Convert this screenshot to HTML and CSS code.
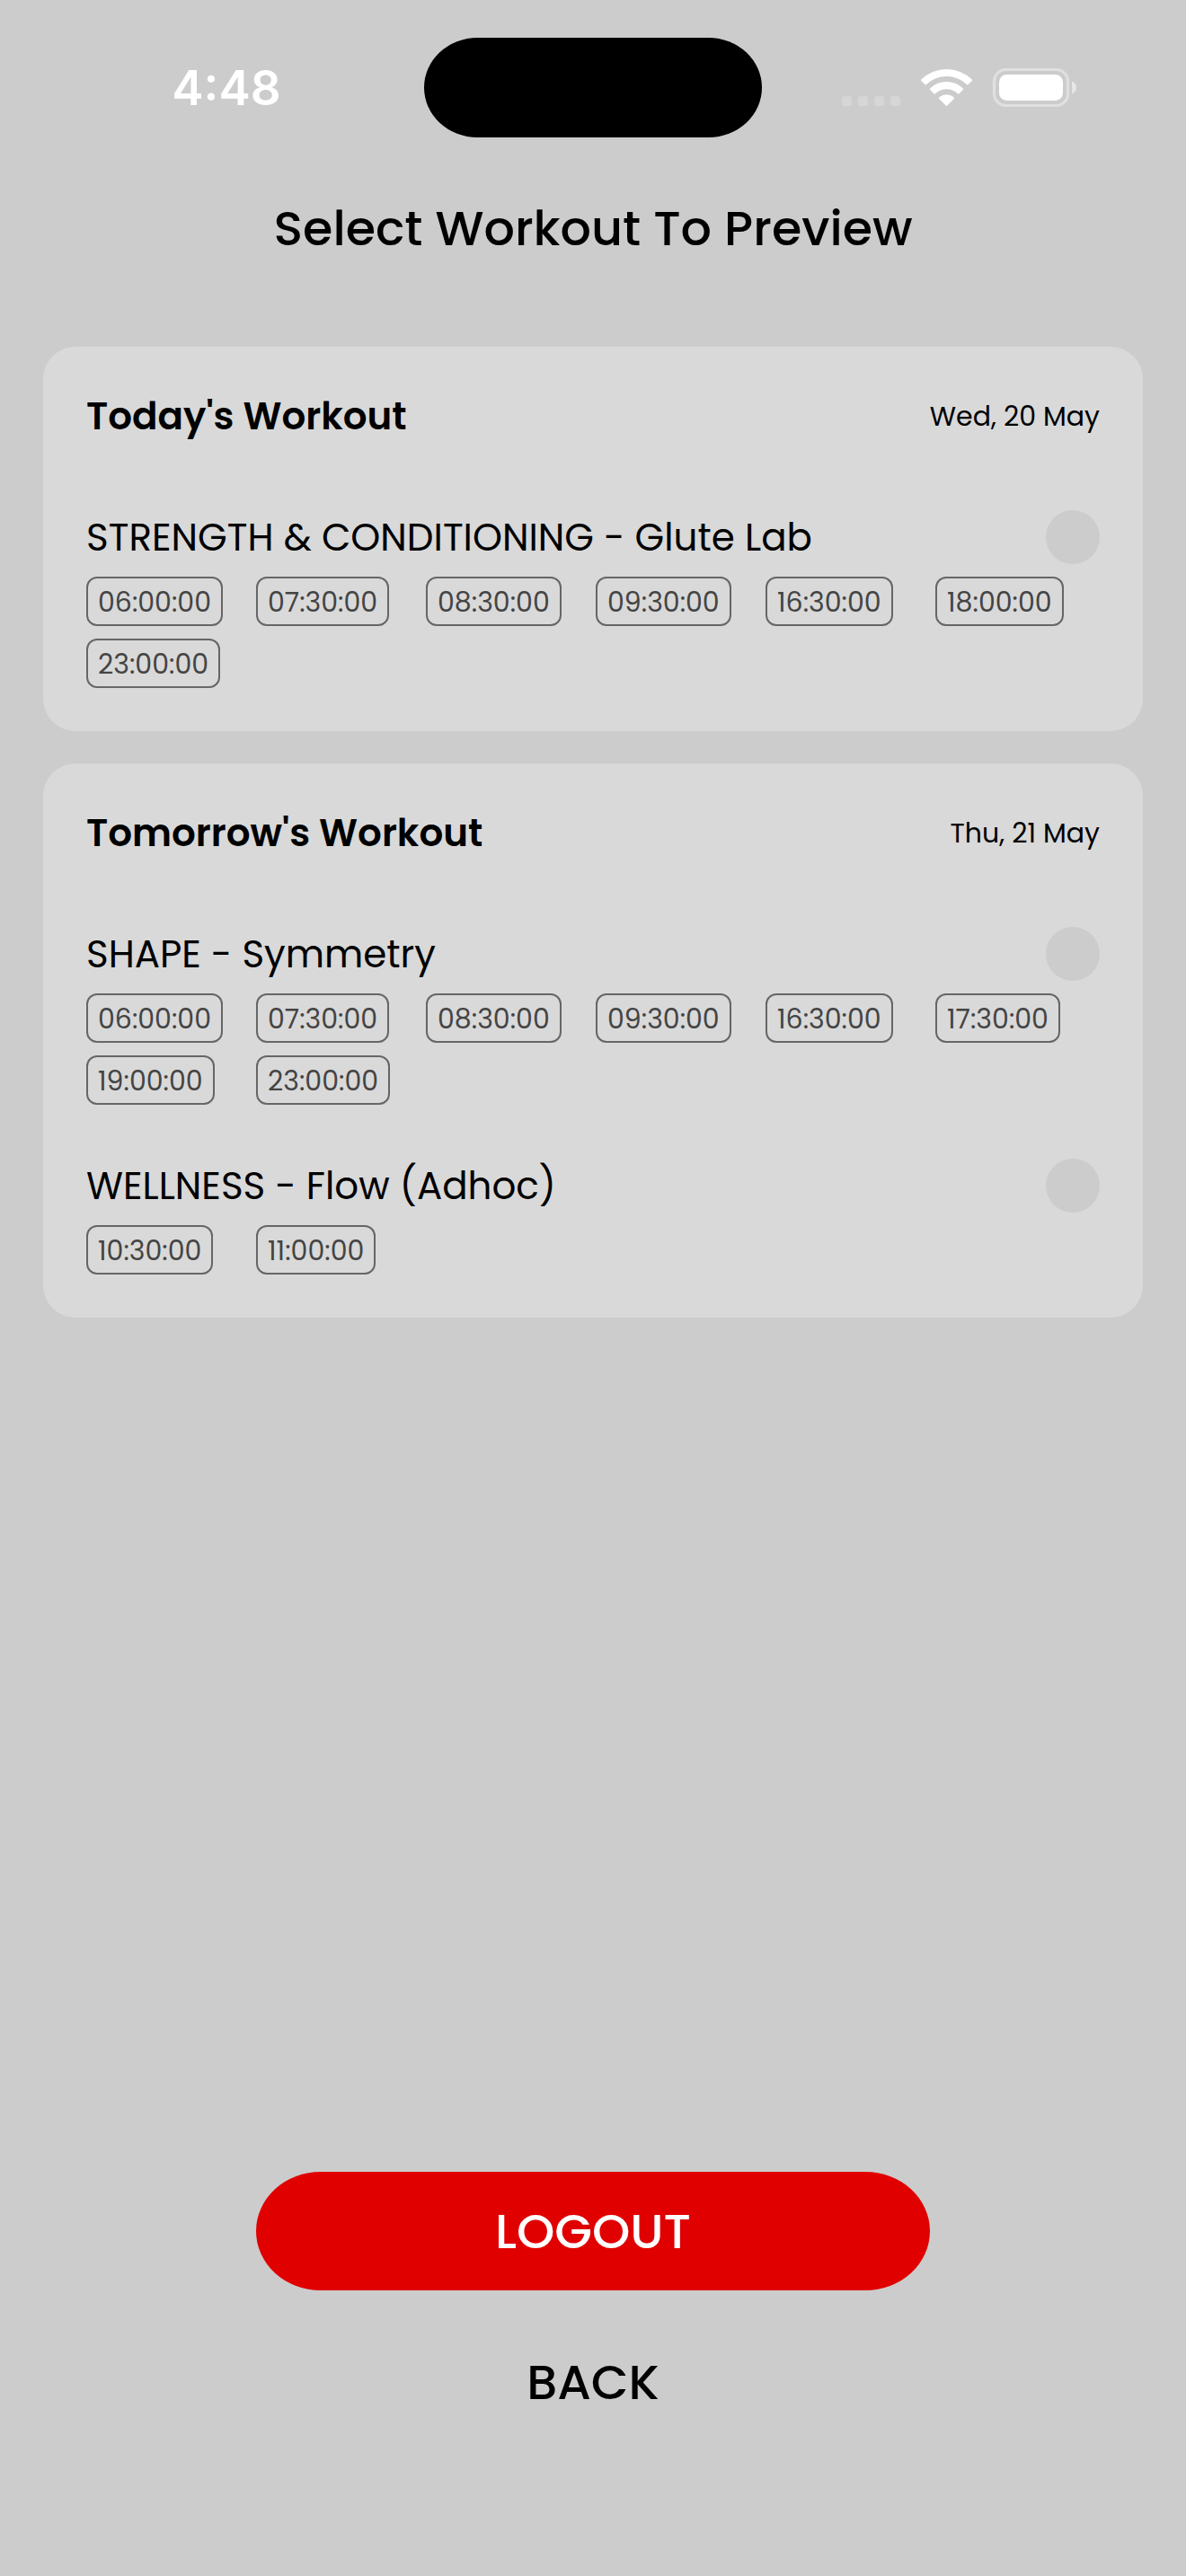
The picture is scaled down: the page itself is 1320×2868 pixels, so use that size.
FILE: index.html
```html
<!DOCTYPE html>
<html lang="en">
<head>
  <meta charset="UTF-8">
  <meta name="viewport" content="width=device-width, initial-scale=1.0">
  <title>Select Workout To Preview</title>
  <link rel="stylesheet" href="styles.css">
</head>
<body>
  <div class="status-bar">
    <span class="time">4:48</span>
    <div class="island"></div>
    <svg class="status-icons" width="262" height="44" viewBox="0 0 262 44" fill="#fff" aria-hidden="true">
      <!-- signal -->
      <g fill="#d6d6d6">
        <rect x="0" y="31" width="11" height="11" rx="3.5"/>
        <rect x="18" y="31" width="11" height="11" rx="3.5"/>
        <rect x="36" y="31" width="11" height="11" rx="3.5"/>
        <rect x="54" y="31" width="11" height="11" rx="3.5"/>
      </g>
      <!-- wifi -->
      <path d="M88.5 12.2A40.5 40.5 0 0 1 144.5 12.2Q145.5 13.3 144.5 14.3L140.7 18Q139.8 18.8 138.8 17.9A32.500 32.500 0 0 0 94.2 17.9Q93.2 18.8 92.3 18L88.5 14.3Q87.5 13.3 88.5 12.2Z"/>
      <path d="M98.4 22.3A26 26 0 0 1 134.6 22.3Q135.6 23.3 134.6 24.3L130.6 28.2Q129.7 29 128.7 28.1A18 18 0 0 0 104.3 28.1Q103.3 29 102.4 28.2L98.4 24.3Q97.4 23.3 98.4 22.3Z"/>
      <path d="M108.4 32.2A12.5 12.5 0 0 1 124.6 32.2Q125.6 33.2 124.6 34.2L117.5 41.3Q116.5 42.3 115.5 41.3L108.4 34.2Q107.4 33.2 108.4 32.2Z"/>
      <!-- battery -->
      <rect x="169.5" y="1.5" width="82" height="40" rx="13" fill="none" stroke="#e0e0e0" stroke-width="3.2"/>
      <rect x="175" y="7" width="71" height="29" rx="8.5"/>
      <path d="M256 14.5Q261 16.5 261 21.5T256 28.5Z" fill="#e6e6e6"/>
    </svg>
  </div>

  <h1>Select Workout To Preview</h1>

  <main class="cards">
    <section class="card">
      <div class="card-header">
        <h2>Today's Workout</h2>
        <span class="date">Wed, 20 May</span>
      </div>
      <div class="workout">
        <div class="workout-title">
          <label for="strength">STRENGTH &amp; CONDITIONING - Glute Lab</label>
          <input type="radio" name="workout" id="strength">
        </div>
        <ul class="times">
          <li>06:00:00</li>
          <li>07:30:00</li>
          <li>08:30:00</li>
          <li>09:30:00</li>
          <li>16:30:00</li>
          <li>18:00:00</li>
          <li>23:00:00</li>
        </ul>
      </div>
    </section>

    <section class="card">
      <div class="card-header">
        <h2>Tomorrow's Workout</h2>
        <span class="date">Thu, 21 May</span>
      </div>
      <div class="workout">
        <div class="workout-title">
          <label for="shape">SHAPE - Symmetry</label>
          <input type="radio" name="workout" id="shape">
        </div>
        <ul class="times">
          <li>06:00:00</li>
          <li>07:30:00</li>
          <li>08:30:00</li>
          <li>09:30:00</li>
          <li>16:30:00</li>
          <li>17:30:00</li>
          <li>19:00:00</li>
          <li>23:00:00</li>
        </ul>
      </div>
      <div class="workout">
        <div class="workout-title">
          <label for="wellness">WELLNESS - Flow (Adhoc)</label>
          <input type="radio" name="workout" id="wellness">
        </div>
        <ul class="times">
          <li>10:30:00</li>
          <li>11:00:00</li>
        </ul>
      </div>
    </section>
  </main>

  <div class="actions">
    <button type="button" class="logout">LOGOUT</button>
    <button type="button" class="back">BACK</button>
  </div>
</body>
</html>
```
FILE: styles.css
```css
* {
  box-sizing: border-box;
}
body {
  display: flex;
  flex-direction: column;
  min-height: 100vh;
  margin: 0;
  background: #ccc;
  color: #000;
  font-family: Poppins, Inter, sans-serif;
}
.status-bar {
  display: grid;
  grid-template-columns: 1fr 376px 1fr;
  align-items: center;
  justify-items: center;
  padding: 42px 32px 0;
}
.time {
  color: #fff;
  font-family: Inter, sans-serif;
  font-size: 53px;
  font-weight: 600;
}
.island {
  width: 100%;
  height: 111px;
  background: #000;
  border-radius: 60px / 56px;
}
h1 {
  margin: 61px 48px 92px;
  font-size: 54px;
  font-weight: 500;
  line-height: 80px;
  text-align: center;
}
.cards {
  display: flex;
  flex-direction: column;
  gap: 36px;
  padding: 0 48px;
}
.card {
  padding: 48px;
  background: #d9d9d9;
  border-radius: 36px;
}
.card-header {
  display: flex;
  justify-content: space-between;
  align-items: center;
  margin-bottom: 74px;
  line-height: 60px;
}
h2 {
  margin: 0;
  font-size: 42px;
  font-weight: 600;
}
.date {
  font-size: 30px;
}
.workout + .workout {
  margin-top: 60px;
}
.workout-title {
  display: flex;
  justify-content: space-between;
  align-items: center;
  margin-bottom: 14px;
  font-size: 42px;
  line-height: 58px;
}
.workout-title label {
  padding-top: 2px;
}
.workout-title input {
  appearance: none;
  width: 60px;
  height: 60px;
  margin: 0;
  background: #ccc;
  border-radius: 50%;
}
.workout-title input:checked {
  background: #e00000;
}
.times {
  display: grid;
  grid-template-columns: repeat(auto-fill, 153px);
  gap: 14px 36px;
  justify-items: start;
  margin: 0;
  padding: 0;
  list-style: none;
}
.times li {
  padding: 2px 11px 0;
  border: 2px solid #666;
  border-radius: 12px;
  color: #444;
  font-size: 30px;
  line-height: 49px;
}
.actions {
  display: flex;
  flex-direction: column;
  align-items: center;
  gap: 60px;
  margin-top: auto;
  padding: 60px 48px 174px;
}
button {
  border: none;
  background: none;
  color: #000;
  font-family: inherit;
  font-size: 54px;
  font-weight: 500;
}
.logout {
  width: 100%;
  max-width: 750px;
  height: 132px;
  background: #e00000;
  border-radius: 72px / 66px;
  color: #fff;
}
.back {
  height: 84px;
}
```
